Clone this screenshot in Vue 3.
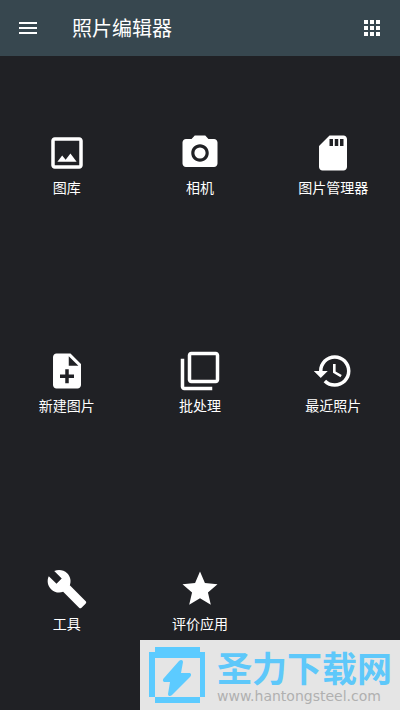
<script setup>
const items = [
  { label: '图库', path: 'M19 5v14H5V5h14m0-2H5c-1.1 0-2 .9-2 2v14c0 1.1.9 2 2 2h14c1.1 0 2-.9 2-2V5c0-1.1-.9-2-2-2zm-5.04 9.29l-2.75 3.54-1.96-2.36L6.5 17h11l-3.54-4.71z' },
  { label: '相机', path: 'M12 8.8a3.2 3.2 0 1 0 0 6.4 3.2 3.2 0 1 0 0-6.4zM9 2L7.17 4H4c-1.1 0-2 .9-2 2v12c0 1.1.9 2 2 2h16c1.1 0 2-.9 2-2V6c0-1.1-.9-2-2-2h-3.17L15 2H9zm3 15c-2.76 0-5-2.24-5-5s2.24-5 5-5 5 2.24 5 5-2.24 5-5 5z' },
  { label: '图片管理器', path: 'M18 2h-8L4.02 8 4 20c0 1.1.9 2 2 2h12c1.1 0 2-.9 2-2V4c0-1.1-.9-2-2-2zm-6 6h-2V4h2v4zm3 0h-2V4h2v4zm3 0h-2V4h2v4z' },
  { label: '新建图片', path: 'M14 2H6c-1.1 0-1.99.9-1.99 2L4 20c0 1.1.89 2 1.99 2H18c1.1 0 2-.9 2-2V8l-6-6zm2 14h-3v3h-2v-3H8v-2h3v-3h2v3h3v2zm-3-7V3.5L18.5 9H13z' },
  { label: '批处理', path: 'M3 5H1v16c0 1.1.9 2 2 2h16v-2H3V5zm18-4H7c-1.1 0-2 .9-2 2v14c0 1.1.9 2 2 2h14c1.1 0 2-.9 2-2V3c0-1.1-.9-2-2-2zm0 16H7V3h14v14z' },
  { label: '最近照片', path: 'M13 3c-4.97 0-9 4.03-9 9H1l3.89 3.89.07.14L9 12H6c0-3.87 3.13-7 7-7s7 3.13 7 7-3.13 7-7 7c-1.93 0-3.68-.79-4.94-2.06l-1.42 1.42C8.27 19.99 10.51 21 13 21c4.97 0 9-4.03 9-9s-4.03-9-9-9zm-1 5v5l4.28 2.54.72-1.21-3.5-2.08V8H12z' },
  { label: '工具', path: 'M22.7 19l-9.1-9.1c.9-2.3.4-5-1.5-6.9-2-2-5-2.4-7.4-1.3L9 6 6 9 1.6 4.7C.4 7.1.9 10.1 2.9 12.1c1.9 1.9 4.6 2.4 6.9 1.5l9.1 9.1c.4.4 1 .4 1.4 0l2.3-2.3c.5-.4.5-1.1.1-1.4z' },
  { label: '评价应用', path: 'M12 17.27L18.18 21l-1.64-7.03L22 9.24l-7.19-.61L12 2 9.19 8.63 2 9.24l5.46 4.73L5.82 21z' },
]
</script>

<template>
  <div class="screen">
    <header class="bar">
      <button class="bar-button" type="button" aria-label="菜单">
        <svg class="bar-icon" viewBox="0 0 24 24"><path d="M3 18h18v-2H3v2zm0-5h18v-2H3v2zm0-7v2h18V6H3z" /></svg>
      </button>
      <h1 class="title">照片编辑器</h1>
      <button class="bar-button" type="button" aria-label="应用">
        <svg class="bar-icon" viewBox="0 0 24 24"><path d="M4 8h4V4H4v4zm6 12h4v-4h-4v4zm-6 0h4v-4H4v4zm0-6h4v-4H4v4zm6 0h4v-4h-4v4zm6-10v4h4V4h-4zm-6 4h4V4h-4v4zm6 6h4v-4h-4v4zm0 6h4v-4h-4v4z" /></svg>
      </button>
    </header>
    <main class="grid">
      <button v-for="item in items" :key="item.label" class="tile" type="button">
        <svg class="tile-icon" viewBox="0 0 24 24" aria-hidden="true"><path :d="item.path" /></svg>
        <span>{{ item.label }}</span>
      </button>
    </main>
    <aside class="watermark">
      <svg class="logo" viewBox="0 0 56 56" aria-hidden="true">
        <path fill-rule="evenodd" d="M6 0h45v5h5v45h-5v6H6v-6H0V5h6zM6 11v39h45V11z" />
        <path d="M30 14c2-2 4-1 4 1l-2 11h8c2 0 3 2 1 4L23 48c-2 2-4 1-4-1l2-12h-5c-2 0-3-2-1-4z" />
      </svg>
      <div class="brand">
        <strong class="brand-name">圣力下载网</strong>
        <span class="brand-url">www.hantongsteel.com</span>
      </div>
    </aside>
  </div>
</template>

<style>
body {
  margin: 0;
  background: #202125;
}
</style>

<style scoped>
.screen {
  display: flex;
  flex-direction: column;
  min-height: 100vh;
  background: #202125;
  color: #fff;
  font-family: Roboto, "Noto Sans CJK SC", sans-serif;
}
.bar {
  display: flex;
  align-items: center;
  height: 56px;
  padding: 0 4px;
  background: #37474f;
}
button {
  border: 0;
  padding: 0;
  background: none;
  color: inherit;
  font: inherit;
}
.bar-button {
  display: grid;
  place-items: center;
  width: 48px;
  height: 48px;
}
.bar-icon {
  width: 24px;
  height: 24px;
  fill: #fff;
}
.title {
  flex: 1;
  margin: 0;
  padding: 2px 0 0 20px;
  font-size: 20px;
  line-height: 28px;
  font-weight: 400;
}
.grid {
  flex: 1;
  display: grid;
  grid-template-columns: repeat(3, 1fr);
  grid-template-rows: repeat(3, 1fr);
}
.tile {
  display: flex;
  flex-direction: column;
  align-items: center;
  justify-content: center;
  gap: 4px;
  font-size: 14px;
  line-height: 20px;
}
.tile-icon {
  width: 42px;
  height: 42px;
  fill: #fff;
}
.watermark {
  position: fixed;
  right: 0;
  bottom: 0;
  display: flex;
  align-items: center;
  gap: 12px;
  box-sizing: border-box;
  width: 260px;
  height: 70px;
  padding-left: 9px;
  background: #e5e5e5;
}
.logo {
  flex: none;
  width: 56px;
  height: 56px;
  fill: #5ccbff;
}
.brand {
  display: flex;
  flex-direction: column;
  padding-top: 4px;
  white-space: nowrap;
}
.brand-name {
  color: #5ec8fa;
  font-family: "Liberation Sans", "Noto Sans CJK SC", sans-serif;
  font-size: 35px;
  line-height: 38px;
  font-weight: 700;
}
.brand-url {
  color: #b0b0b0;
  font-family: "DejaVu Sans", sans-serif;
  font-size: 14px;
  line-height: 14px;
}
</style>
